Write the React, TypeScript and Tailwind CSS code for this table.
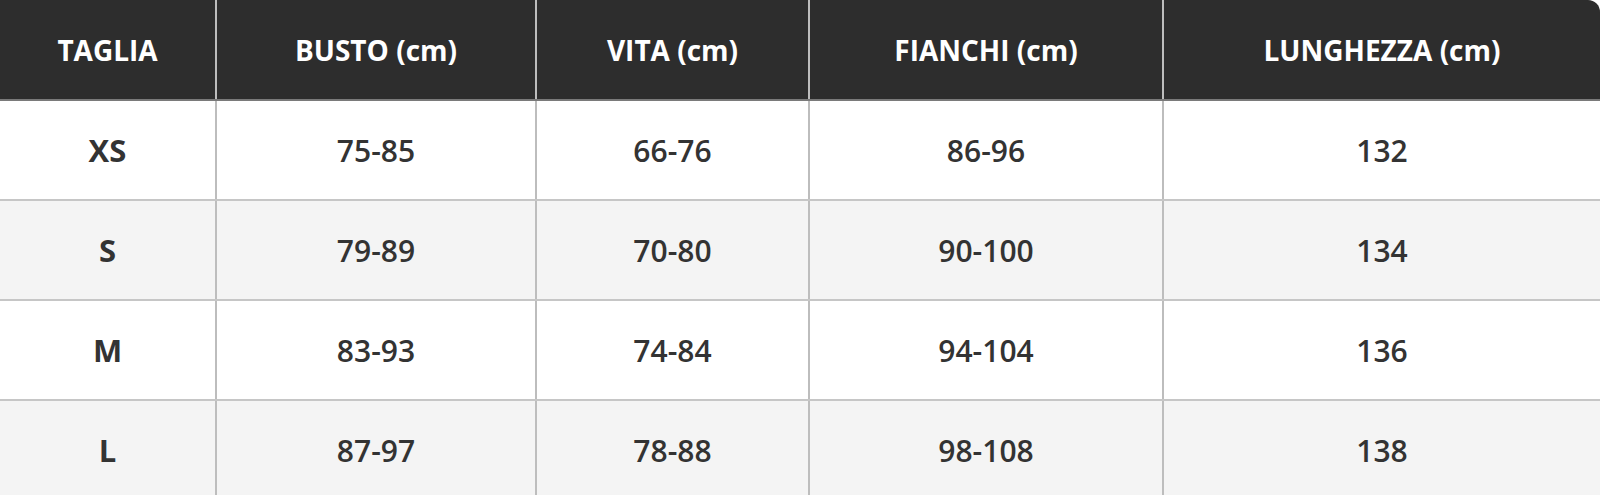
const HEADERS = ['TAGLIA', 'BUSTO (cm)', 'VITA (cm)', 'FIANCHI (cm)', 'LUNGHEZZA (cm)']

const ROWS = [
  ['XS', '75-85', '66-76', '86-96', '132'],
  ['S', '79-89', '70-80', '90-100', '134'],
  ['M', '83-93', '74-84', '94-104', '136'],
  ['L', '87-97', '78-88', '98-108', '138'],
]

export default function App() {
  return (
    <div className="h-[495px] w-[1600px] overflow-hidden bg-white" style={{ fontFamily: '"Open Sans", "Noto Sans", sans-serif' }}>
      <div className="overflow-hidden rounded-tr-[12px]">
        <div className="grid h-[101px] grid-cols-[215px_320px_273px_354px_1fr] border-b-2 border-[#7a7a7a] bg-[#2d2d2d]">
          {HEADERS.map((h, i) => (
            <div
              key={h}
              className={`flex items-center justify-center text-[28px] font-bold text-white ${i > 0 ? 'border-l-2 border-[#bdbdbd]' : ''}`}
            >
              {h}
            </div>
          ))}
        </div>
        {ROWS.map((row, r) => (
          <div
            key={row[0]}
            className={`grid h-[100px] grid-cols-[215px_320px_273px_354px_1fr] border-b-2 border-[#c6c6c6] ${r % 2 === 1 ? 'bg-[#f4f4f4]' : 'bg-white'}`}
          >
            {row.map((cell, i) => (
              <div
                key={i}
                className={`flex items-center justify-center text-[#333333] ${i === 0 ? 'text-[31px] font-bold' : 'text-[30px] font-semibold'} ${i > 0 ? 'border-l-2 border-[#bdbdbd]' : ''}`}
              >
                {cell}
              </div>
            ))}
          </div>
        ))}
      </div>
    </div>
  )
}
